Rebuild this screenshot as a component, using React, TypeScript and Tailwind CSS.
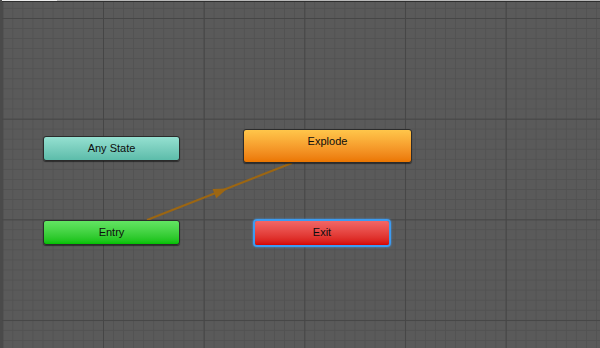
import React from 'react';

interface StateNode {
  id: string;
  label: string;
  x: number;
  y: number;
  w: number;
  h: number;
  fill: string;
}

const nodes: StateNode[] = [
  { id: 'any', label: 'Any State', x: 43, y: 136, w: 137, h: 25, fill: 'bg-gradient-to-b from-[#95e0d1] to-[#5cbcaa]' },
  { id: 'explode', label: 'Explode', x: 243, y: 129, w: 169, h: 34, fill: 'bg-gradient-to-b from-[#ffc64a] to-[#eb7600]' },
  { id: 'entry', label: 'Entry', x: 43, y: 220, w: 137, h: 25, fill: 'bg-gradient-to-b from-[#62e462] to-[#00c000]' },
];

const App: React.FC = () => {
  return (
    <div className="relative w-[600px] h-[348px] overflow-hidden bg-[#5a5a5a] font-['Liberation_Sans',Arial,sans-serif]">
      {/* grid */}
      <div className="absolute inset-0 bg-[linear-gradient(to_right,#525252_1px,transparent_1px),linear-gradient(to_bottom,#525252_1px,transparent_1px)] bg-[size:10.07px_10.07px] bg-[position:2.3px_7.9px]" />
      <div className="absolute inset-0 bg-[linear-gradient(to_right,#464646_1px,transparent_1px),linear-gradient(to_bottom,#464646_1px,transparent_1px)] bg-[size:100.7px_100.7px] bg-[position:2.3px_18px]" />

      {/* top edge */}
      <div className="absolute left-0 top-0 w-full h-[1px] bg-[#b8b8b8]" />
      <div className="absolute left-0 top-0 w-[57px] h-[1px] bg-[#ececec]" />
      <div className="absolute left-0 top-[1px] w-full h-[1px] bg-[#2e2e2e]" />
      <div className="absolute left-0 top-0 w-[2px] h-full bg-[#4a4a4a]" />

      {/* transition */}
      <svg className="absolute inset-0" width="600" height="348">
        <line x1="147" y1="220" x2="292" y2="163" stroke="#9c6612" strokeWidth="2" />
        <polygon points="228,191.5 214,186.5 214,196.5" fill="#9c6612" transform="rotate(-21.5 220 191.5)" />
      </svg>

      {nodes.map((n) => (
        <div
          key={n.id}
          className={`absolute rounded-[3px] border border-[#2b2b2b] shadow-[0_1px_1px_rgba(0,0,0,0.5)] ${n.fill}`}
          style={{ left: n.x, top: n.y, width: n.w, height: n.h }}
        >
          <div className="pt-[5px] text-center text-[11px] leading-[13px] text-[#0d0d0d]">{n.label}</div>
        </div>
      ))}

      {/* selected exit */}
      <div className="absolute left-[253px] top-[219px] w-[138px] h-[28px] rounded-[4px] border-2 border-[#3d9bf0] shadow-[0_0_2px_#3d9bf0]">
        <div className="h-full rounded-[2px] bg-gradient-to-b from-[#f26666] to-[#d70000] pt-[5px] text-center text-[11px] leading-[13px] text-[#0d0d0d]">
          Exit
        </div>
      </div>
    </div>
  );
};

export default App;
